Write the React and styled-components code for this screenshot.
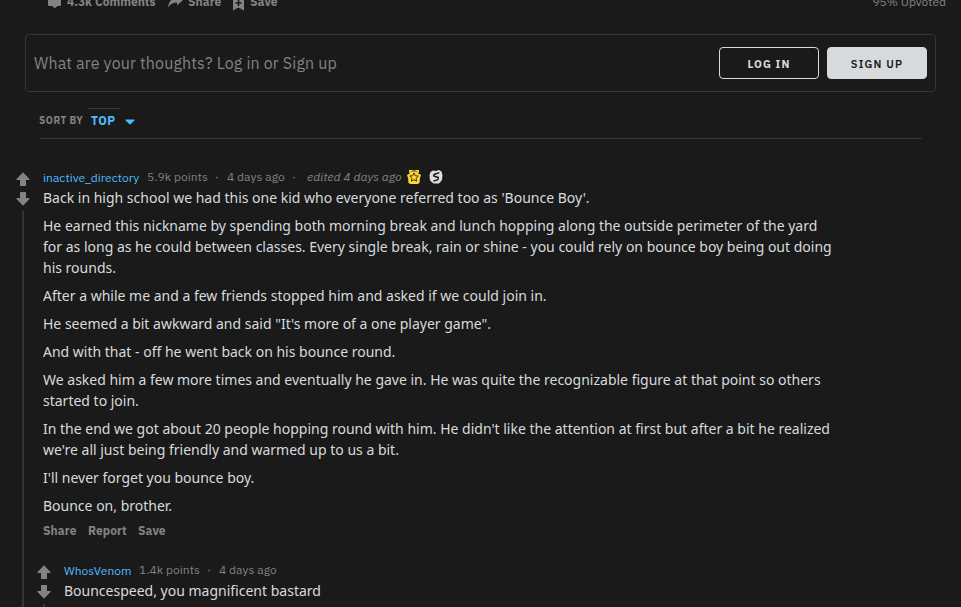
import React from "react";
import styled, { createGlobalStyle } from "styled-components";

const GlobalStyle = createGlobalStyle`
  * { box-sizing: border-box; }
  body {
    margin: 0;
    background: #1a1a1b;
    font-family: "IBM Plex Sans", Roboto, "Liberation Sans", sans-serif;
    color: #d7dadc;
    overflow: hidden;
  }
`;

const Page = styled.main`
  width: 961px;
  height: 607px;
  overflow: hidden;
  background: #1a1a1b;
`;

const PostBar = styled.div`
  display: flex;
  align-items: center;
  height: 24px;
  margin-top: -10px;
  padding: 0 15px 0 47px;
  color: #818384;
  font-size: 12px;
  line-height: 16px;
`;

const PostAction = styled.span`
  display: flex;
  align-items: center;
  gap: ${(p) => p.$gap}px;
  width: ${(p) => p.$width}px;
  font-weight: 700;
  white-space: nowrap;
  letter-spacing: ${(p) => p.$spacing}px;
`;

const Upvoted = styled.span`
  margin-left: auto;
`;

const Prompt = styled.section`
  display: flex;
  align-items: center;
  gap: 8px;
  width: 911px;
  height: 58px;
  margin: 20px 0 0 25px;
  padding: 0 8px;
  border: 1px solid #343536;
  border-radius: 4px;
`;

const PromptText = styled.span`
  flex: 1;
  color: #818384;
  font-size: 16px;
  line-height: 20px;
  letter-spacing: 0.16px;
`;

const Button = styled.button`
  width: 100px;
  height: 32px;
  padding: 1px 0 0;
  border: 1px solid #d7dadc;
  border-radius: 4px;
  background: ${(p) => (p.$filled ? "#d7dadc" : "transparent")};
  color: ${(p) => (p.$filled ? "#1a1a1b" : "#d7dadc")};
  font-family: "IBM Plex Sans", Roboto, sans-serif;
  font-size: 11px;
  font-weight: ${(p) => (p.$filled ? 600 : 700)};
  line-height: 24px;
  letter-spacing: ${(p) => (p.$filled ? 1.15 : 1.1)}px;
`;

const SortBar = styled.div`
  display: flex;
  align-items: flex-start;
  width: 883px;
  height: 31px;
  margin: 16px 0 0 39px;
  border-bottom: 1px solid #343536;
`;

const SortLabel = styled.span`
  width: 48px;
  padding-top: 5px;
  color: #818384;
  font-size: 10px;
  font-weight: 700;
  line-height: 16px;
  letter-spacing: 0.5px;
`;

const SortValue = styled.span`
  width: 33px;
  padding: 4px 0 0 4px;
  border-top: 1px solid #343536;
  color: #4fbcff;
  font-size: 12px;
  font-weight: 700;
  line-height: 16px;
  letter-spacing: 0.5px;
`;

const Caret = styled.svg`
  width: 10px;
  height: 6px;
  margin: 11px 0 0 5px;
  fill: #4fbcff;
`;

const Comment = styled.article`
  display: flex;
  margin: ${(p) => (p.$reply ? "13px 0 0 -7px" : "28px 0 0 15px")};
`;

const Rail = styled.div`
  display: flex;
  flex-direction: column;
  align-items: center;
  width: 16px;
  flex: none;
`;

const Arrow = styled.svg`
  width: 14px;
  height: 14px;
  margin-top: ${(p) => (p.$down ? 6 : 5)}px;
  fill: #818384;
  transform: ${(p) => (p.$down ? "rotate(180deg)" : "none")};
`;

const ThreadLine = styled.div`
  flex: 1;
  width: 2px;
  min-height: 40px;
  margin-top: 5px;
  background: #343536;
`;

const Content = styled.div`
  width: 793px;
  margin-left: 12px;
`;

const Meta = styled.header`
  display: flex;
  align-items: center;
  height: 20px;
  color: #818384;
  font-size: 12px;
  line-height: 16px;
  white-space: nowrap;
`;

const Author = styled.span`
  width: ${(p) => p.$width}px;
  padding-top: 2px;
  color: #4fbcff;
  letter-spacing: 0.04px;
`;

const MetaText = styled.span`
  width: ${(p) => p.$width}px;
  letter-spacing: 0.04px;
  font-style: ${(p) => (p.$italic ? "italic" : "normal")};
`;

const Dot = styled.span`
  width: ${(p) => p.$width}px;
  padding-left: 8px;
`;

const Award = styled.svg`
  width: 14px;
  height: 14px;
  margin-right: 8px;
`;

const Text = styled.p`
  margin: 0 0 7px;
  font-family: "Noto Sans", sans-serif;
  font-size: 14px;
  line-height: 21px;
`;

const Actions = styled.footer`
  display: flex;
  gap: 12px;
  height: 24px;
  color: #818384;
  font-size: 12px;
  font-weight: 700;
  line-height: 16px;
  letter-spacing: 0.1px;
`;

const ActionLink = styled.span`
  width: ${(p) => p.$width}px;
`;

const paragraphs = [
  "Back in high school we had this one kid who everyone referred too as 'Bounce Boy'.",
  "He earned this nickname by spending both morning break and lunch hopping along the outside perimeter of the yard for as long as he could between classes. Every single break, rain or shine - you could rely on bounce boy being out doing his rounds.",
  "After a while me and a few friends stopped him and asked if we could join in.",
  "He seemed a bit awkward and said \"It's more of a one player game\".",
  "And with that - off he went back on his bounce round.",
  "We asked him a few more times and eventually he gave in. He was quite the recognizable figure at that point so others started to join.",
  "In the end we got about 20 people hopping round with him. He didn't like the attention at first but after a bit he realized we're all just being friendly and warmed up to us a bit.",
  "I'll never forget you bounce boy.",
  "Bounce on, brother.",
];

function VoteArrow({ down = false }) {
  return (
    <Arrow $down={down} viewBox="0 0 14 14">
      <path d="M7 .2 13.700 7.200Q13.800 8 13 8H10v5.400q0 .6-.6.6H4.600q-.6 0-.6-.6V8H1Q.2 8 .3 7.200Z" />
    </Arrow>
  );
}

function VoteRail() {
  return (
    <Rail>
      <VoteArrow />
      <VoteArrow down />
      <ThreadLine />
    </Rail>
  );
}

export default function App() {
  return (
    <Page>
      <GlobalStyle />
      <PostBar>
        <PostAction $width={121} $gap={5} $spacing={0}>
          <svg width="15" height="16" viewBox="0 0 15 16" fill="#818384"><path d="M2 0h11q1 0 1 1v10q0 1-1 1h-2.500L7.800 14.300 5 12H2q-1 0-1-1V1q0-1 1-1Z" /></svg>
          4.3k Comments
        </PostAction>
        <PostAction $width={65} $gap={5} $spacing={0.07}>
          <svg width="15" height="14" viewBox="0 0 15 14" fill="#818384"><path d="M9 -1 15 5 9 10.500V7.600C5 7.500 2.500 9 0 12.500 .5 7 3.500 3 9 2.500Z" /></svg>
          Share
        </PostAction>
        <PostAction $width={50} $gap={6} $spacing={0.1}>
          <svg width="11" height="17" viewBox="0 0 11 17" fill="#818384"><path fillRule="evenodd" d="M1 0h9q1 0 1 1v15.500L5.500 13.500 0 16.500V1Q0 0 1 0ZM4.800 6v2.300H2.500v1.500h2.300V12h1.500V9.800h2.300V8.300H6.300V6Z" /></svg>
          Save
        </PostAction>
        <Upvoted>95% Upvoted</Upvoted>
      </PostBar>
      <Prompt>
        <PromptText>What are your thoughts? Log in or Sign up</PromptText>
        <Button>LOG IN</Button>
        <Button $filled>SIGN UP</Button>
      </Prompt>
      <SortBar>
        <SortLabel>SORT BY</SortLabel>
        <SortValue>TOP</SortValue>
        <Caret viewBox="0 0 10 6"><path d="M.5.500h9v1L5.500 5.300h-1L.5 1.500Z" /></Caret>
      </SortBar>
      <Comment>
        <VoteRail />
        <Content>
          <Meta>
            <Author $width={104}>inactive_directory</Author>
            <MetaText $width={60}>5.9k points</MetaText>
            <Dot $width={20}>·</Dot>
            <MetaText $width={57}>4 days ago</MetaText>
            <Dot $width={23}>·</Dot>
            <MetaText $italic $width={100}>edited 4 days ago</MetaText>
            <Award viewBox="0 0 14 14">
              <path fill="#ffd635" d="M2 0h3l2 .8L9 0h3v2.300L11 3.300 14 5l-1.300 4v3.500L11 14H3l-1.700-1.500V9L0 5l3-1.700-1-1Z" />
              <path fill="#ffd635" stroke="#3a3010" strokeWidth="1" strokeLinejoin="round" d="M7 3 8.300 5.700 11.300 6.100 9.100 8.200 9.600 11.100 7 9.800 4.400 11.100 4.900 8.200 2.700 6.100 5.700 5.700Z" />
              <path fill="none" stroke="#8a7118" strokeWidth=".8" d="M3.500 1.500h7" />
            </Award>
            <Award viewBox="0 0 14 14">
              <path fill="#dedede" d="M4 .5 7 1l3-1 2.500 1.500L13.500 5 13 10l-3 3.500H4.500L1 10.500.5 5 1.500 2Z" />
              <path fill="none" stroke="#1a1a1b" strokeWidth="1.400" strokeLinejoin="round" d="M10.300 2.600 5 4.500 4.700 6l4.700 1.500-.6 2.300-4.300 1.200" />
            </Award>
          </Meta>
          {paragraphs.map((text) => <Text key={text}>{text}</Text>)}
          <Actions>
            <ActionLink $width={33}>Share</ActionLink>
            <ActionLink $width={38}>Report</ActionLink>
            <ActionLink $width={30}>Save</ActionLink>
          </Actions>
          <Comment $reply>
            <VoteRail />
            <Content>
              <Meta>
                <Author $width={75}>WhosVenom</Author>
                <MetaText $width={60}>1.4k points</MetaText>
                <Dot $width={20}>·</Dot>
                <MetaText $width={60}>4 days ago</MetaText>
              </Meta>
              <Text>Bouncespeed, you magnificent bastard</Text>
            </Content>
          </Comment>
        </Content>
      </Comment>
    </Page>
  );
}
